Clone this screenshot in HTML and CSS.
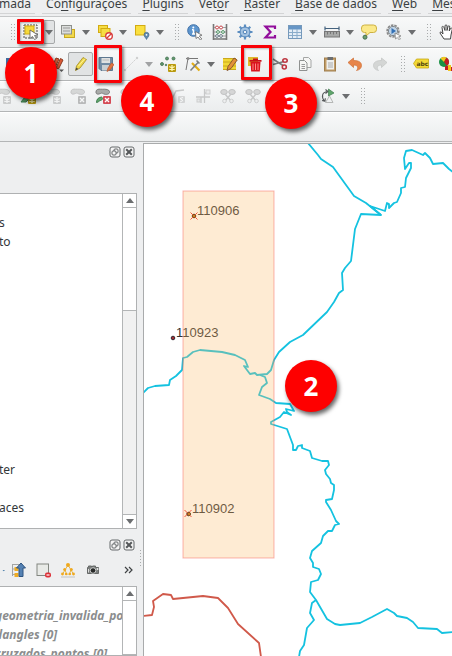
FILE: index.html
```html
<!DOCTYPE html>
<html lang="pt-BR">
<head>
<meta charset="utf-8">
<title>Edição vetorial</title>
<link rel="stylesheet" href="styles.css">
</head>
<body>
<svg class="defs" aria-hidden="true">
  <symbol id="down" viewBox="0 0 8 5"><path d="M0 0h8L4 5z" fill="#6c6e70"/></symbol>
  <symbol id="float" viewBox="0 0 12 12"><rect x="1" y="1" width="10" height="10" rx="2" fill="#f4f4f4" stroke="#65686a" stroke-width="1"/><rect x="5" y="3" width="4" height="4" rx="1" fill="none" stroke="#65686a"/><rect x="3" y="5" width="4" height="4" rx="1" fill="#f4f4f4" stroke="#65686a"/></symbol>
  <symbol id="close" viewBox="0 0 12 12"><rect x="1" y="1" width="10" height="10" rx="2" fill="#f4f4f4" stroke="#65686a" stroke-width="1"/><path d="M3.2 3.2l5.6 5.6M8.800 3.200L3.200 8.800" stroke="#55585a" stroke-width="2"/></symbol>
  <symbol id="star" viewBox="0 0 8 8"><rect width="8" height="8" rx="1" fill="#b99a10"/><path d="M4 1v6M1.3 2.5l5.4 3M6.7 2.5l-5.4 3" stroke="#fff7b0" stroke-width="1.3"/></symbol>
  <symbol id="cross" viewBox="0 0 8 8"><rect width="8" height="8" rx="1" fill="#d54b56"/><path d="M2 2l4 4M6 2L2 6" stroke="#fff" stroke-width="1.4"/></symbol>
  <symbol id="blob" viewBox="0 0 16 8"><path d="M1 4C1 1 4 .7 6 1s7-.8 9 1.500S14 7 11 6.500 8 4.500 6 5.500 1 7 1 4z" fill="#a9aba9" stroke="#777" stroke-width="1"/></symbol>
</svg>

<div class="app">
  <nav class="menu">
    <a href="#">mada</a>
    <a href="#">Co<u>n</u>figurações</a>
    <a href="#"><u>P</u>lugins</a>
    <a href="#">Vet<u>o</u>r</a>
    <a href="#"><u>R</u>aster</a>
    <a href="#"><u>B</u>ase de dados</a>
    <a href="#"><u>W</u>eb</a>
    <a href="#"><u>M</u>esh</a>
  </nav>

  <div class="bar bar-select">
    <i class="handle"></i>
    <button class="tool" aria-label="Selecionar feições"><svg viewBox="0 0 16 16"><rect x="1" y="1" width="13" height="13" fill="#e9e9e4" stroke="#4d4d4d" stroke-dasharray="2 1"/><rect x="2" y="2" width="9" height="8" fill="#f5d93a" stroke="#d3ae13"/><path d="M7 6l8 5-3.500.5 2 3-2 1-2-3-2.500 2z" fill="#fff" stroke="#555" stroke-width=".8"/></svg></button>
    <button class="drop pressed" aria-label="Opções de seleção"><svg><use href="#down"/></svg></button>
    <button class="tool" aria-label="Selecionar por valor"><svg viewBox="0 0 16 16"><rect x="4.500" y="5.500" width="10" height="8" fill="#f2d94c" stroke="#c9a81f"/><rect x="1.500" y="1.500" width="10" height="8.500" fill="#dcdedc" stroke="#8c8f8c"/><path d="M3 4h7M3 7h7" stroke="#999"/></svg></button>
    <button class="drop" aria-label="Mais seleções"><svg><use href="#down"/></svg></button>
    <button class="tool" aria-label="Desfazer seleção"><svg viewBox="0 0 16 16"><rect x="1.500" y="1.500" width="9" height="7" fill="#f6dd44" stroke="#d2ab12"/><rect x="4" y="4.500" width="9" height="8" fill="#f6dd44" stroke="#d2ab12"/><circle cx="12" cy="12" r="3.300" fill="#fff" stroke="#d93d3d" stroke-width="1.400"/><path d="M9.700 14.300l4.600-4.600" stroke="#d93d3d" stroke-width="1.300"/></svg></button>
    <button class="drop" aria-label="Mais opções"><svg><use href="#down"/></svg></button>
    <button class="tool" aria-label="Selecionar por localização"><svg viewBox="0 0 16 16"><rect x="1.500" y="1.500" width="9.500" height="9.500" fill="#fae03f" stroke="#d2ab12"/><path d="M12.500 15.500c-1-2-2.500-3-2.500-4.700a2.500 2.500 0 0 1 5 0c0 1.700-1.500 2.700-2.500 4.700z" fill="#5d88ad" stroke="#3e6485" stroke-width=".6"/><circle cx="12.500" cy="10.800" r=".9" fill="#fff"/></svg></button>
    <button class="drop" aria-label="Mais opções"><svg><use href="#down"/></svg></button>
    <i class="handle"></i>
    <button class="tool" aria-label="Identificar"><svg viewBox="0 0 16 16"><circle cx="6.500" cy="6.500" r="5.800" fill="#5d96cf" stroke="#3e6fa6"/><path d="M6.500 5.500V10M5 10h3M5 5.700h1.500" stroke="#fff" stroke-width="1.500"/><circle cx="6.300" cy="3.400" r="1" fill="#fff"/><path d="M8.500 7.500l6.500 3.700-2.700.8 2.500 3-1.500 1-2.300-3-2 1.500z" fill="#fff" stroke="#666" stroke-width=".8"/></svg></button>
    <button class="tool" aria-label="Calculadora"><svg viewBox="0 0 16 16"><path d="M1.500 0v16M14.500 0v16M1 15h14" stroke="#777" stroke-width="1.600"/><path d="M2 3.500h12M2 8h12M2 12h12" stroke="#888" stroke-width=".8"/><g fill="#fff" stroke="#c8474c"><circle cx="5" cy="3.500" r="1.500"/><circle cx="9" cy="3.500" r="1.500"/></g><g fill="#fff" stroke="#4b9161"><circle cx="6" cy="8" r="1.400"/><circle cx="11" cy="8" r="1.400"/></g><g fill="#fff" stroke="#687886"><circle cx="5" cy="12" r="1.400"/><circle cx="9" cy="12" r="1.400"/></g></svg></button>
    <button class="tool" aria-label="Caixa de ferramentas"><svg viewBox="0 0 16 16"><path d="M8 .5v15M.5 8h15M2.700 2.700l10.600 10.600M13.300 2.700L2.700 13.300" stroke="#5d8fc2" stroke-width="2.200"/><circle cx="8" cy="8" r="5" fill="#a4c3e2" stroke="#4e82b8"/><circle cx="8" cy="8" r="1.800" fill="#edf2f7" stroke="#4e82b8"/></svg></button>
    <button class="tool" aria-label="Estatísticas"><svg viewBox="0 0 16 16"><path d="M13 5V2.500H3.500L8.500 8l-5 5.500H13V11" fill="none" stroke="#920e9b" stroke-width="2.200"/></svg></button>
    <button class="tool" aria-label="Tabela de atributos"><svg viewBox="0 0 16 16"><rect x="1.500" y="1.500" width="13" height="13" fill="#e4edf6" stroke="#7599bb"/><path d="M2 2h12v3.500H2z" fill="#6796c6"/><path d="M2 8.500h12M2 11.500h12M5.500 5v9M10 5v9" stroke="#8aacca"/></svg></button>
    <button class="drop" aria-label="Mais opções"><svg><use href="#down"/></svg></button>
    <button class="tool" aria-label="Medir"><svg viewBox="0 0 16 16"><path d="M1 4.500h14M1 2.500v4M15 2.500v4" stroke="#44627e" stroke-width="1.200"/><rect x=".5" y="7.500" width="15" height="5.500" fill="#a7a9a8" stroke="#777"/><path d="M3.500 8v2.500M6.500 8v2M9.500 8v2.500M12.500 8v2" stroke="#777"/></svg></button>
    <button class="drop" aria-label="Mais opções"><svg><use href="#down"/></svg></button>
    <button class="tool" aria-label="Dicas de mapa"><svg viewBox="0 0 16 16"><path d="M3.500 1h9a3 3 0 0 1 3 3v1.500a3 3 0 0 1-3 3H9L5 12V8.500H3.500a3 3 0 0 1-3-3V4a3 3 0 0 1 3-3z" fill="#fbe98a" stroke="#cdb142"/><circle cx="4" cy="13.200" r="2" fill="#6ea06c" stroke="#466f54"/></svg></button>
    <button class="tool" aria-label="Executar ação"><svg viewBox="0 0 16 16"><circle cx="7" cy="7" r="5.800" fill="none" stroke="#8a8a8a" stroke-width="1.800" stroke-dasharray="2.500 1"/><circle cx="7" cy="7" r="4.600" fill="#bfd3e6" stroke="#82898e"/><path d="M5.500 4l4.500 3-4.500 3z" fill="#3270b5"/><path d="M9 9l6 3-2.500.8 2 2.200-1.200 1-2-2.500L9.500 15z" fill="#fff" stroke="#777" stroke-width=".7"/></svg></button>
    <button class="drop" aria-label="Mais opções"><svg><use href="#down"/></svg></button>
    <i class="handle"></i>
    <button class="tool" aria-label="Mover mapa"><svg viewBox="0 0 16 16"><path d="M5 15c-1-2-3-4-4-6 0-1.500 1.500-1.500 2 0l1 1L3 3.500C2.700 2 4.500 2 5 3.500l1 3V2c0-1.500 2-1.500 2 0v4.500l1-4c.3-1.200 2-.8 1.800.5L10.200 7l1.300-2.500c.7-1 2-.3 1.700 1L12 11l-.5 4z" fill="#fff" stroke="#444" stroke-width="1"/></svg></button>
  </div>

  <div class="bar bar-edit">
    <button class="tool cut" aria-label="Camada atual"><svg viewBox="0 0 16 16"><rect x="5" y="2" width="10" height="10" fill="#3e6ca0"/></svg></button>
    <button class="tool" aria-label="Nova camada"><svg viewBox="0 0 16 16"><rect x="2" y="2" width="12" height="12" fill="#5d88ad"/></svg></button>
    <button class="tool" aria-label="Edições atuais"><svg viewBox="0 0 16 16"><path d="M3 13L8 2l3 1-5 11-3 2zM8 12l4.500-9.500L15 4l-4.500 9z" fill="#dc5a38" stroke="#8c3b21"/><path d="M11 13.500h5l-2.500 2.500z" fill="#555"/></svg></button>
    <button class="tool pressed" aria-label="Alternar edição" aria-pressed="true"><svg viewBox="0 0 16 16"><path d="M2.500 14.500l1-4.500L10 1.500l3.500 2L7 12z" fill="#efd94b" stroke="#a8922c" stroke-width=".9"/><path d="M5.500 10L12 2.500" stroke="#fff29a"/><path d="M2.500 14.500l.8-3 1.900 1.500z" fill="#444"/></svg></button>
    <button class="tool" aria-label="Salvar edições"><svg viewBox="0 0 16 16"><path d="M1 1.500h13.500v13H3l-2-2z" fill="#718ba3" stroke="#5d778f"/><rect x="3.500" y="2" width="8.500" height="5" fill="#dfe1e1"/><path d="M4.500 4h6.500" stroke="#bbb"/><rect x="4" y="9" width="7" height="5.500" fill="#c9cfd3"/><path d="M9 15.500l1-3.500 3.500-5 2.500 1.500-3.500 5z" fill="#e07440" stroke="#b9582f" stroke-width=".7"/></svg></button>
    <button class="tool" aria-label="Digitalizar" disabled><svg class="faded" viewBox="0 0 16 16"><path d="M2 14L14 2" stroke="#999" stroke-dasharray="2 1"/><circle cx="2" cy="14" r="1.200" fill="#999"/><circle cx="14" cy="2" r="1.200" fill="#999"/></svg></button>
    <button class="drop" aria-label="Mais opções" disabled><svg class="dim"><use href="#down"/></svg></button>
    <button class="tool" aria-label="Adicionar ponto"><svg viewBox="0 0 16 16"><g fill="#619b6d" stroke="#416f50" stroke-width=".8"><circle cx="2" cy="8" r="1.500"/><circle cx="7" cy="2.500" r="1.500"/><circle cx="13.500" cy="2.500" r="1.500"/><circle cx="6" cy="9" r=".8"/></g><use href="#star" x="8" y="8" width="8" height="8"/></svg></button>
    <button class="tool" aria-label="Ferramenta de vértice"><svg viewBox="0 0 16 16"><path d="M1 2.500h12M3 2.500L1 14" stroke="#777" stroke-width="1"/><circle cx="3" cy="2.500" r="1.500" fill="#8a8a8a"/><path d="M7 7l7.500 7.500" stroke="#e3ad13" stroke-width="2.200"/><path d="M13.500 6L5.500 14.500" stroke="#7b7f80" stroke-width="1.600"/><path d="M11.500 4.500l3 3" stroke="#7b7f80" stroke-width="1.600"/></svg></button>
    <button class="drop" aria-label="Mais opções"><svg><use href="#down"/></svg></button>
    <button class="tool" aria-label="Modificar atributos"><svg viewBox="0 0 16 16"><rect x="1" y="2" width="13" height="12" fill="#f1d734"/><path d="M1 2.500h13M1 6h13M1 10h13M1 13.500h13" stroke="#caa81d"/><path d="M5 14.500l1-4 6-8.500 3.200 2L9 12.500z" fill="#e29039" stroke="#80512b" stroke-width=".9"/></svg></button>
    <button class="tool" aria-label="Excluir selecionados"><svg viewBox="0 0 16 16"><rect x="1" y="1" width="10" height="9" fill="#dfb92d"/><path d="M3.500 6h10l-.7 9.500H4.200z" fill="#d9141e"/><path d="M2.500 4.800h12M6 3.300h5" stroke="#c9101a" stroke-width="1.800"/><path d="M6 7.500v6.500M8.500 7.500v6.500M11 7.500v6.500" stroke="#ff8b86"/></svg></button>
    <button class="tool" aria-label="Cortar"><svg viewBox="0 0 16 16"><path d="M1 3l10 6.500M1 8.500l11-3" stroke="#777a7c" stroke-width="1.500"/><g fill="none" stroke="#bd3640" stroke-width="1.600"><ellipse cx="13" cy="4.500" rx="2.200" ry="1.700"/><ellipse cx="12.300" cy="11" rx="2" ry="2"/></g></svg></button>
    <button class="tool" aria-label="Copiar"><svg viewBox="0 0 16 16"><path d="M6.500 1.500h5l2.500 2.500v7.500H6.500z" fill="#f6f6f5" stroke="#a4a6a5"/><path d="M2.500 4.500h5l2.500 2.500v7.500H2.500z" fill="#f6f6f5" stroke="#8f9190"/><path d="M4.500 8.500h3.500M4.500 10.500h3.500M4.500 12.500h3.500" stroke="#999"/></svg></button>
    <button class="tool" aria-label="Colar"><svg viewBox="0 0 16 16"><rect x="2.500" y="2" width="11" height="13" fill="#c29d68" stroke="#a07f4e"/><rect x="4.500" y="4" width="7.500" height="9.500" fill="#eef0ef"/><rect x="5.500" y="1" width="5.500" height="3" fill="#6b6e70"/><path d="M6 7h5M6 9h5M6 11h5" stroke="#aaa"/></svg></button>
    <button class="tool" aria-label="Desfazer"><svg viewBox="0 0 16 16"><path d="M1 6.500L6.500 2v2.500c5 0 8 1.500 8 5 0 2.500-2 4.500-5 5 2-2 2-5.500-3-5.500v2.500z" fill="#e7854b" stroke="#cf6e35" stroke-width=".7"/></svg></button>
    <button class="tool" aria-label="Refazer" disabled><svg viewBox="0 0 16 16"><path d="M15 6.500L9.500 2v2.500c-5 0-8 1.500-8 5 0 2.500 2 4.500 5 5-2-2-2-5.500 3-5.500v2.500z" fill="#d4d6d5" stroke="#c2c4c3" stroke-width=".7"/></svg></button>
    <i class="handle"></i>
    <button class="tool" aria-label="Rótulos"><svg viewBox="0 0 16 16"><path d="M.5 7.500L3.500 3H15.500v9H3.500z" fill="#f3d936" stroke="#c7a817" stroke-width=".8"/><text class="tag" x="3.500" y="9.500">abc</text></svg></button>
    <button class="tool" aria-label="Diagramas"><svg viewBox="0 0 16 16"><circle cx="6" cy="6" r="5" fill="#1b9146"/><path d="M6 6L2.500 2.400A5 5 0 0 1 8.500 1.600z" fill="#f4c51d"/><path d="M6 6l2.500-4.400A5 5 0 0 1 9 10z" fill="#c41b24"/><rect x="7" y="10" width="4" height="4" fill="#c41b24"/><rect x="10" y="9" width="3" height="6" fill="#f4c51d"/><rect x="13" y="11" width="3" height="4" fill="#c41b24"/></svg></button>
  </div>

  <div class="bar bar-advanced">
    <button class="tool" aria-label="Adicionar anel" disabled><svg class="faded" viewBox="0 0 16 16"><use href="#blob" width="15" height="8"/><use class="mono" href="#star" x="8" y="8" width="8" height="8"/></svg></button>
    <button class="tool" aria-label="Adicionar parte"><svg viewBox="0 0 16 16"><use href="#blob" width="15" height="8"/><path d="M1 14l4-5 4 2-3 3z" fill="#5fa56b" stroke="#3f7d4e"/><use href="#star" x="8" y="8" width="8" height="8"/></svg></button>
    <button class="tool" aria-label="Preencher anel" disabled><svg class="faded" viewBox="0 0 16 16"><use href="#blob" width="15" height="8"/><use class="mono" href="#star" x="8" y="8" width="8" height="8"/></svg></button>
    <button class="tool" aria-label="Excluir anel" disabled><svg class="faded" viewBox="0 0 16 16"><use href="#blob" width="15" height="8"/><use class="mono" href="#cross" x="8" y="8" width="8" height="8"/></svg></button>
    <button class="tool" aria-label="Excluir parte"><svg viewBox="0 0 16 16"><use href="#blob" width="15" height="8"/><path d="M1.500 14.500c0-3 1.500-5 5-5.500 2 1 1 3-1 3.500s-2 2-4 2z" fill="#5fa56b" stroke="#3f7d4e"/><use href="#cross" x="8" y="8" width="8" height="8"/></svg></button>
    <button class="tool" aria-label="Remodelar" disabled><svg class="faded" viewBox="0 0 16 16"><use href="#blob" width="15" height="8"/></svg></button>
    <button class="tool" aria-label="Deslocar curva" disabled><svg class="faded" viewBox="0 0 16 16"><path d="M1 14C4 2 10 2 15 3" fill="none" stroke="#888"/></svg></button>
    <button class="tool" aria-label="Inverter linha" disabled><svg class="faded" viewBox="0 0 16 16"><path d="M1 13L6 3l8-1" fill="none" stroke="#888" stroke-width="1.500"/><rect x="8" y="8" width="7" height="7" rx="1" fill="#aaa"/><path d="M13 9.500l-3 1 3 2-3 1.500" fill="none" stroke="#fff"/></svg></button>
    <button class="tool" aria-label="Aparar ou estender" disabled><svg class="faded" viewBox="0 0 16 16"><path d="M1 9h14M6 9v6M9.500 1v14M9 5h6" stroke="#888" stroke-width="1.300"/><rect x="2" y="11" width="3" height="3" fill="#ddd" stroke="#999"/><rect x="11" y="2" width="4" height="4" fill="#ddd" stroke="#999"/></svg></button>
    <button class="tool" aria-label="Dividir feições" disabled><svg class="faded" viewBox="0 0 16 16"><g fill="#aaa" stroke="#777"><ellipse cx="4" cy="4" rx="3.300" ry="2.500"/><ellipse cx="12" cy="4" rx="3.300" ry="2.500"/></g><path d="M5 6l6 7M11 6l-6 7" stroke="#888" stroke-width="1.500"/><g fill="#eee" stroke="#999"><circle cx="4.500" cy="13" r="1.800"/><circle cx="11.500" cy="13" r="1.800"/></g></svg></button>
    <button class="tool" aria-label="Dividir partes" disabled><svg class="faded" viewBox="0 0 16 16"><g fill="#aaa" stroke="#777"><ellipse cx="4" cy="4" rx="3.300" ry="2.500"/><ellipse cx="12" cy="4" rx="3.300" ry="2.500"/></g><path d="M5 6l6 7M11 6l-6 7" stroke="#888" stroke-width="1.500"/><g fill="#eee" stroke="#999"><circle cx="4.500" cy="13" r="1.800"/><circle cx="11.500" cy="13" r="1.800"/></g></svg></button>
    <button class="tool" aria-label="Mesclar feições" disabled><svg class="faded" viewBox="0 0 16 16"><use href="#blob" width="15" height="8"/></svg></button>
    <button class="tool" aria-label="Mesclar atributos" disabled><svg class="faded" viewBox="0 0 16 16"><use href="#blob" width="15" height="8"/></svg></button>
    <button class="tool" aria-label="Rotacionar símbolos"><svg viewBox="0 0 16 16"><path d="M4.500 13C1 9 2 4 7.500 3.500M5.500 1.500l2.500 2-2.500 2M2 12.500l3 .8.300-3" fill="none" stroke="#55585a" stroke-width="1.100"/><path d="M8.500 1v7l5.500-3z" fill="#5fa56b" stroke="#3f7d4e" stroke-width=".7"/><path d="M5.500 14.500h7.500L9.500 8z" fill="none" stroke="#b5b7b6"/></svg></button>
    <button class="drop" aria-label="Mais opções"><svg><use href="#down"/></svg></button>
    <i class="handle"></i>
  </div>

  <div class="bar bar-empty"></div>

  <main class="work">
    <aside class="docks">
      <section class="dock dock-browser">
        <header class="dock-head">
          <button class="mini" aria-label="Destacar painel"><svg><use href="#float"/></svg></button>
          <button class="mini" aria-label="Fechar painel"><svg><use href="#close"/></svg></button>
        </header>
        <div class="pane">
          <ul class="tree">
            <li></li><li>s</li><li>to</li><li></li><li></li><li></li><li></li><li></li><li></li><li></li><li></li><li></li><li></li><li></li><li>ter</li><li></li><li>aces</li>
          </ul>
          <div class="scroll">
            <button class="step up" aria-label="Rolar para cima"><svg><use href="#down"/></svg></button>
            <div class="thumb"></div>
            <button class="step" aria-label="Rolar para baixo"><svg><use href="#down"/></svg></button>
          </div>
        </div>
      </section>
      <section class="dock dock-layers">
        <header class="dock-head">
          <button class="mini" aria-label="Destacar painel"><svg><use href="#float"/></svg></button>
          <button class="mini" aria-label="Fechar painel"><svg><use href="#close"/></svg></button>
        </header>
        <div class="layer-tools">
          <button class="tool cut" aria-label="Expandir"><svg viewBox="0 0 16 16"><path d="M8 8h8l-4 4z" fill="#467ba7"/></svg></button>
          <button class="tool" aria-label="Mover para o topo"><svg viewBox="0 0 16 16"><path d="M2.500 2v12M2.500 2.500h7M2.500 7h3M2.500 12.500h3" stroke="#a2a4a3"/><path d="M4.500 5h4v4h-4zM4.500 11h4v4h-4z" fill="#efac24"/><path d="M11 1l4.500 5H13v8.500H9V6H6.500z" fill="#5481b3" stroke="#2e5480"/></svg></button>
          <button class="tool" aria-label="Remover camada"><svg viewBox="0 0 16 16"><rect x="2" y="2" width="11.500" height="11.500" fill="#e8eae7" stroke="#828680"/><rect x="10" y="10.500" width="6" height="5" rx="2" fill="#dc3037"/><path d="M11.500 13h3" stroke="#fff" stroke-width="1.200"/></svg></button>
          <button class="tool" aria-label="Topologia"><svg viewBox="0 0 16 16"><path d="M8 3L5 8l-3 5M8 3l3 5 3 5M5 8l2 5M11 8l-2 5" fill="none" stroke="#e8b84d"/><g fill="#efa91f"><circle cx="8" cy="3" r="2"/><circle cx="4.700" cy="7.500" r="1.500"/><circle cx="11.300" cy="7.500" r="1.500"/><circle cx="2.500" cy="12" r="1.400"/><circle cx="6.200" cy="12" r="1.300"/><circle cx="9.800" cy="12" r="1.300"/><circle cx="13.500" cy="12" r="1.400"/></g><path d="M1 15h14" stroke="#c2c4c2"/></svg></button>
          <button class="tool" aria-label="Capturar"><svg viewBox="0 0 16 16"><path d="M2.500 5.500h1V4h3v1.500h1V4h3v1.500h3v6h-11z" fill="#7b7e7d" stroke="#666968"/><circle cx="8" cy="8.500" r="2.800" fill="#282a29" stroke="#c9cbca"/><circle cx="12.500" cy="7" r="1" fill="#eee"/><path d="M3.500 7v3.500" stroke="#ddd"/></svg></button>
          <button class="more" aria-label="Mais ferramentas"><svg viewBox="0 0 9 8"><path d="M1 1l3 3-3 3M5 1l3 3-3 3" fill="none" stroke="#3f4244" stroke-width="1.200"/></svg></button>
        </div>
        <div class="pane">
          <ul class="tree layers">
            <li></li><li>geometria_invalida_pontos</li><li>dangles [0]</li><li>cruzados_pontos [0]</li>
          </ul>
          <div class="scroll">
            <button class="step up" aria-label="Rolar para cima"><svg><use href="#down"/></svg></button>
            <div class="thumb tall"></div>
          </div>
        </div>
      </section>
    </aside>
    <div class="splitter"><i></i></div>
    <div class="map">
      <svg viewBox="144 144 308 512" preserveAspectRatio="xMinYMin slice" role="img" aria-label="Mapa">
        <g class="river">
          <path d="M143 393L148 388 155 386 169 385 170 380 176 376 182 370 183 358 187 357 193 352 200 350 222 352 235 355 245 360 248 367 244 366 250 374 255 373 257 375 267 374 271 370 274 360 279 352 290 342 303 335 327 312 334 302 339 293 343 290 342 273 345 268 351 261 355 229 361 214 381 215 370 206 385 211 387 203 389 204 389 208 394 203 397 202 401 193 401 188 405 187 406 178 411 168 411 163 409 163 405 169 404 158 406 151 412 150 423 155 425 153 430 158 433 164 443 163 449 169 453 172"/>
          <path d="M308 143L318 155 321 159 333 167 354 196 366 203 381 215"/>
          <path d="M260 375L265 377 267 383 262 387 259 395 270 399 276 403 290 404 294 411 286 409 287 412 291 415 284 412 280 417 271 422 271 424 287 429 293 445 293 450 296 450 298 446 302 445 302 448 310 451 312 458 322 461 328 461 329 465 325 470 326 474 330 479 331 483 334 485 334 490 332 499 326 500 326 502 331 510 336 521 339 524 335 525 332 531 328 531 323 536 321 543 312 551 310 558 313 563 313 567 319 569 321 574 318 580 311 582 310 592 316 600 327 619 335 624 340 625 360 623 372 617 387 609 394 613 397 616 407 618 413 622 418 628 437 629 442 633 453 632"/>
          <path d="M316 600L312 603 310 613 314 620 307 628 304 645 300 651 299 657"/>
        </g>
        <path class="road" d="M143 616L152 615 154 607 153 601 163 594 171 595 173 599 203 596 218 598 228 608 238 624 259 643 261 657"/>
        <g class="marks"><circle cx="173" cy="338" r="1.800"/><circle cx="194" cy="216" r="1.800"/><circle cx="188.500" cy="514" r="1.800"/></g>
        <g class="labels"><text x="197" y="215">110906</text><text x="176" y="337">110923</text><text x="192" y="513">110902</text></g>
        <rect class="area" x="183" y="191" width="91" height="367"/>
        <g class="errors"><path d="M190.500 212.500l7 7M197.500 212.500l-7 7M184.500 510l7 7M191.500 510l-7 7"/></g>
        <g class="cores"><circle cx="194" cy="216" r="1.500"/><circle cx="189" cy="514" r="1.500"/></g>
      </svg>
    </div>
  </main>

  <i class="frame frame-select"></i>
  <i class="frame frame-save"></i>
  <i class="frame frame-delete"></i>
  <b class="step-no step-1">1</b>
  <b class="step-no step-2">2</b>
  <b class="step-no step-3">3</b>
  <b class="step-no step-4">4</b>
</div>
</body>
</html>
```

FILE: styles.css
```css
* { box-sizing: border-box; }

body {
  margin: 0;
  font-family: "Noto Sans", sans-serif;
  font-size: 12px;
  color: #33373a;
  background: #eeeff0;
}

.defs { position: absolute; width: 0; height: 0; }

.app {
  position: relative;
  display: flex;
  flex-direction: column;
  height: 100vh;
  overflow: hidden;
}

button {
  display: flex;
  align-items: center;
  justify-content: center;
  flex: none;
  margin: 0;
  padding: 0;
  border: 0;
  background: none;
}

/* Menu */
.menu {
  display: flex;
  align-items: flex-end;
  flex: none;
  gap: 7px;
  height: 16px;
  margin-left: -1px;
  padding-bottom: 2px;
  white-space: nowrap;
  overflow: hidden;
}

.menu a {
  flex: none;
  padding: 0 4px;
  border-bottom: 1px solid #d3d4d5;
  color: #3b3f42;
  line-height: 18px;
  text-decoration: none;
}

.menu a:first-child { padding-left: 0; }
.menu u { text-underline-offset: 2px; }

/* Toolbars */
.bar {
  display: flex;
  align-items: center;
  flex: none;
  height: 32px;
  border-top: 1px solid #fff;
  border-bottom: 1px solid #b3b5b6;
  background: linear-gradient(#f8f9f9, #ebedee);
  overflow: hidden;
}

.bar-select { padding-left: 2px; border-top-color: #c5c7c8; }
.bar-edit { height: 33px; padding-bottom: 1px; }
.bar-advanced { height: 31px; padding-bottom: 1px; }
.bar-advanced .tool:first-child { margin-left: -10px; }
.bar-empty { height: 30px; }

.tool { width: 25px; height: 24px; }
.tool svg { width: 16px; height: 16px; }
.tool.cut { width: 18px; }
.drop { width: 12px; height: 24px; }
.drop svg { width: 8px; height: 5px; }

.pressed {
  border: 1px solid #a6a8a9;
  border-radius: 2px;
  background: #e1e3e4;
}

.faded { opacity: 0.4; }
.dim { opacity: 0.6; }
.mono { filter: grayscale(1); }

.tag {
  font: bold 6px "DejaVu Sans", sans-serif;
  fill: #4d4310;
}

.handle {
  flex: none;
  width: 16px;
  height: 18px;
  background: radial-gradient(circle, #a9abac 0 1px, transparent 1px) 8px 0 / 3px 3px;
  background-clip: content-box;
  padding: 0 3px 0 8px;
}

/* Docked panels */
.work {
  display: flex;
  flex: 1;
  min-height: 0;
  padding-top: 1px;
}

.docks {
  display: flex;
  flex-direction: column;
  width: 137px;
  flex: none;
}

.dock { display: flex; flex-direction: column; min-height: 0; }
.dock-browser { flex: none; height: 386px; }
.dock-layers { flex: 1; }

.dock-head {
  display: flex;
  justify-content: flex-end;
  flex: none;
  gap: 2px;
  height: 50px;
  padding: 3px 2px 0 0;
}

.dock-layers .dock-head { height: 28px; padding-top: 10px; }
.mini { width: 12px; height: 12px; }
.mini svg { width: 12px; height: 12px; }

.layer-tools {
  display: flex;
  align-items: center;
  flex: none;
  height: 29px;
  padding: 0 4px 3px 0;
}

.layer-tools .tool.cut { width: 5px; overflow: hidden; }
.more { width: 9px; height: 24px; margin-left: auto; }
.more svg { width: 9px; height: 8px; }

.pane {
  display: flex;
  flex: 1;
  min-height: 0;
  border: 1px solid #afb1b2;
  border-left: 0;
  background: #fff;
}

.tree {
  flex: 1;
  min-width: 0;
  margin: 0;
  padding: 0;
  list-style: none;
  overflow: hidden;
  white-space: nowrap;
}

.tree li { height: 19px; margin-left: -1px; line-height: 19px; }

.layers {
  color: #8b8d8e;
  font-weight: bold;
  font-style: italic;
}

.layers li { margin-left: -5px; }

.scroll {
  display: flex;
  flex-direction: column;
  flex: none;
  width: 14px;
  border-left: 1px solid #b3b5b6;
  background: #f1f1f1;
}

.step { height: 14px; background: #fff; border-top: 1px solid #b3b5b6; }
.step.up { border-top: 0; border-bottom: 1px solid #b3b5b6; }
.step svg { width: 8px; height: 5px; }
.step.up svg { transform: rotate(180deg); }

.thumb {
  flex: none;
  height: 103px;
  margin-bottom: auto;
  border-bottom: 1px solid #b3b5b6;
  background: #fff;
}

.thumb.tall { flex: 1; }

.splitter {
  display: flex;
  align-items: center;
  flex: none;
  width: 6px;
  padding: 316px 1px 0 2px;
}

.splitter i {
  flex: 1;
  height: 17px;
  background: radial-gradient(circle, #a9abac 0 1px, transparent 1px) 0 0 / 3px 3px;
}

/* Map canvas */
.map {
  flex: 1;
  min-width: 0;
  border-top: 1px solid #a9abac;
  border-left: 1px solid #a9abac;
  background: #fff;
  overflow: hidden;
}

.map svg { display: block; width: 100%; height: 100%; }
.river { fill: none; stroke: #14c2e0; stroke-width: 1.8; stroke-linejoin: round; }
.road { fill: none; stroke: #d0594a; stroke-width: 1.8; stroke-linejoin: round; }
.marks { fill: #a52c34; stroke: #302830; }
.labels { font: 13px "Liberation Sans", sans-serif; fill: #303030; }
.area { fill: rgba(253, 190, 110, 0.3); stroke: rgba(245, 90, 80, 0.45); stroke-width: 1; }
.errors { fill: none; stroke: #f4583c; stroke-width: 1; }
.cores { fill: #f0912a; stroke: #6b4415; stroke-width: 0.8; }

/* Tutorial callouts, laid over the window */
.frame {
  position: absolute;
  border: 3px solid #f90006;
  border-radius: 1px;
  box-shadow: 2px 2px 3px rgba(0, 0, 0, 0.45), inset 1px 1px 2px rgba(0, 0, 0, 0.3);
}

.frame-select { left: 17px; top: 19px; width: 27px; height: 25px; }
.frame-save { left: 94px; top: 45px; width: 28px; height: 38px; }
.frame-delete { left: 241px; top: 45px; width: 31px; height: 35px; }

.step-no {
  position: absolute;
  display: flex;
  align-items: center;
  justify-content: center;
  width: 52px;
  height: 52px;
  border-radius: 50%;
  background: #fe0000;
  box-shadow: 2px 3px 4px rgba(0, 0, 0, 0.6);
  color: #fff;
  font: bold 26px "Open Sans", sans-serif;
}

.step-1 { left: 5px; top: 47px; }
.step-2 { left: 285px; top: 360px; }
.step-3 { left: 265px; top: 77px; }
.step-4 { left: 121px; top: 75px; }
```
